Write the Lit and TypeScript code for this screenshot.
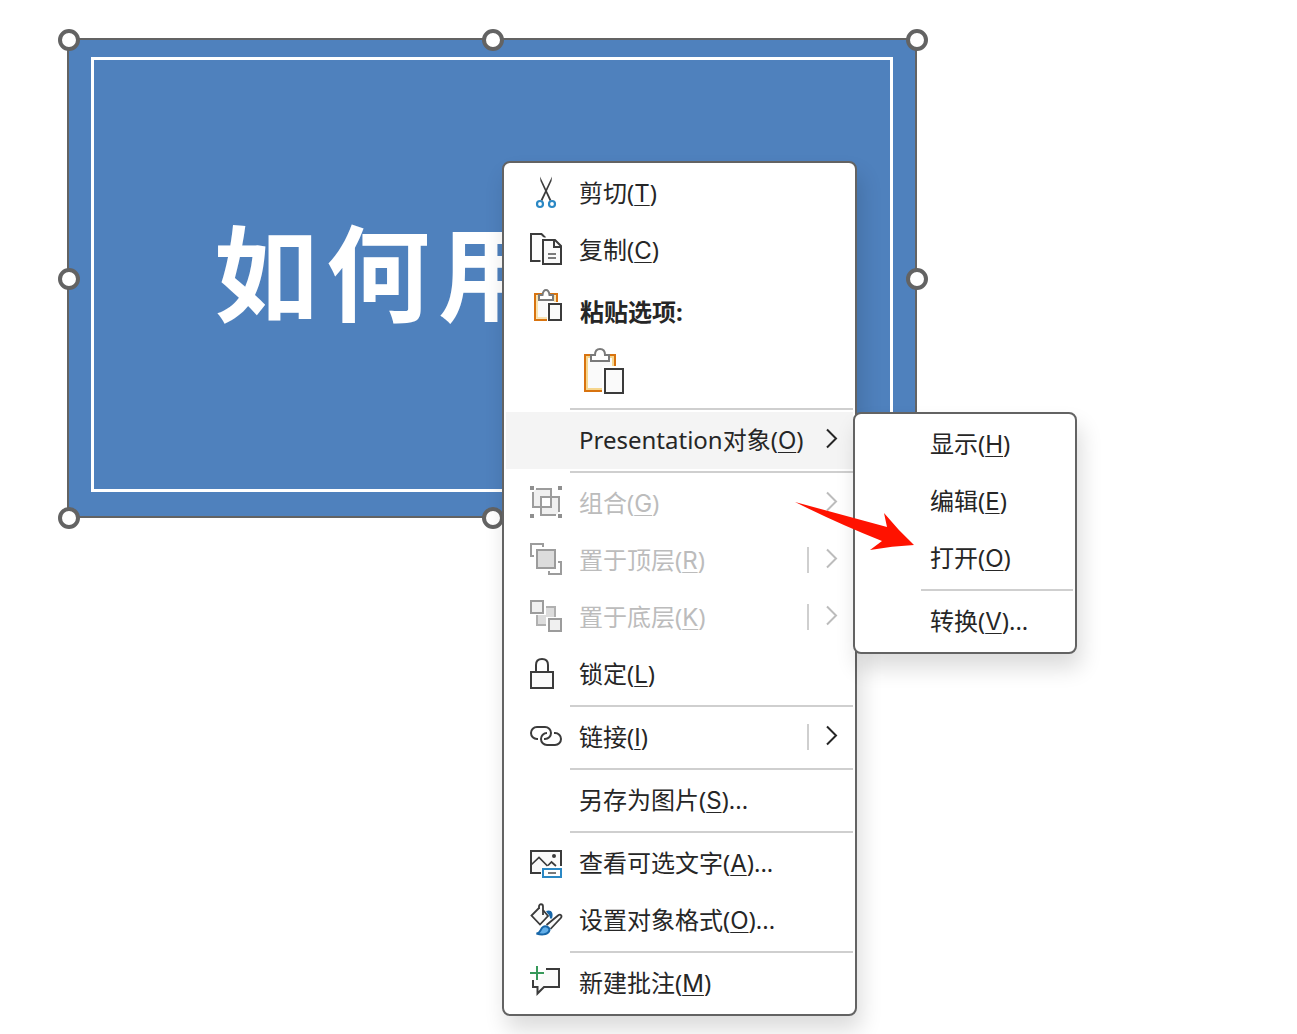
import { LitElement, html, css, svg, nothing, TemplateResult } from "lit";
import { customElement, property } from "lit/decorators.js";
import { classMap } from "lit/directives/class-map.js";

interface Entry {
  label: string;
  key: string;
  tail?: string;
  icon?: string;
  disabled?: boolean;
  arrow?: boolean;
  split?: boolean;
  submenu?: (Entry | "line")[];
}

const dark = "#3b3b3b";
const grey = "#9c9c9c";

const icons: Record<string, TemplateResult> = {
  cut: svg`
    <path d="M12 0.5 L12.500 5 L21.700 25 L23.300 24 Z" fill=${dark} />
    <path d="M24 0.5 L23.500 5 L14.300 25 L12.700 24 Z" fill=${dark} />
    <g fill="#fff" stroke="#2b88c4" stroke-width="2.2">
      <circle cx="12" cy="28" r="3" /><circle cx="24" cy="28" r="3" />
    </g>`,
  copy: svg`
    <path d="M13 28 H3 V1 H13.500 L17.500 5" fill="#fafafa" stroke=${dark} stroke-width="2" />
    <path d="M15 7 H27 L33 13 V31 H15 Z" fill="#fafafa" stroke="#fff" stroke-width="5" />
    <path d="M15 7 H27 L33 13 V31 H15 Z" fill="#fafafa" stroke=${dark} stroke-width="2" />
    <path d="M26 7 V14 H33" fill="none" stroke=${dark} stroke-width="2" />
    <path d="M20 21 H28 M20 25 H28" stroke="#7a7a7a" stroke-width="1.8" />`,
  paste: svg`
    <path d="M7 6 H29 V32 H7 Z" fill="#fafafa" stroke="#d8730f" stroke-width="2" />
    <path d="M9 8 H27 V30 H9 Z" fill="none" stroke="#f8dc9c" stroke-width="1.6" />
    <path d="M19 14 H35 V35 H19 Z" fill="#fff" />
    <path d="M11 12 V7 H14.500 C15 3.500 16 2 18 2 S21 3.500 21.500 7 H25 V12 Z" fill="#fff" stroke="#7a7a7a" stroke-width="2" />
    <rect x="21" y="16" width="12" height="16" fill="#fafafa" stroke=${dark} stroke-width="2" />`,
  group: svg`
    <g fill="#8f8f8f"><rect x="2" y="0" width="4" height="4" /><rect x="30" y="0" width="4" height="4" />
    <rect x="2" y="28" width="4" height="4" /><rect x="30" y="28" width="4" height="4" /></g>
    <path d="M5 6 V21 H23 V3 H8 Z" fill="#f0f0f0" />
    <path d="M13 11 H31 V26 L28 29 H13 Z" fill="#f0f0f0" />
    <rect x="14" y="12" width="8" height="8" fill="#fff" />
    <path d="M8 3 H23 V21 H5 V6" fill="none" stroke=${grey} stroke-width="2" />
    <path d="M31 26 V11 H13 V29 H28" fill="none" stroke=${grey} stroke-width="2" />`,
  front: svg`
    <path d="M15 4 V1 H3 V13 H6 M30 19 H33 V31 H21 V28" fill="none" stroke=${grey} stroke-width="2" />
    <rect x="9" y="7" width="18" height="18" fill="#dcdcdc" stroke=${grey} stroke-width="2" />`,
  back: svg`
    <path d="M18 7 H27 V17 H18 Z M9 15 H18 V25 H9 Z" fill="#dcdcdc" />
    <path d="M18 7 H27 V17 M9 15 V25 H18" fill="none" stroke="#b0b0b0" stroke-width="2" />
    <g fill="#f0f0f0" stroke=${grey} stroke-width="2"><rect x="3" y="1" width="12" height="12" /><rect x="21" y="19" width="12" height="12" /></g>`,
  lock: svg`
    <rect x="3" y="15" width="22" height="16" fill="#fafafa" stroke=${dark} stroke-width="2" />
    <path d="M8 15 V8 C8 4 10.500 2 14 2 S20 4 20 8 V15" fill="none" stroke=${dark} stroke-width="2" />`,
  link: svg`
    <path d="M10 19 H9 A6 6 0 0 1 9 7 H17 A6 6 0 0 1 17 19 H16" fill="none" stroke=${dark} stroke-width="2" />
    <path d="M19 13 A6 6 0 0 0 19 25 H27 A6 6 0 0 0 27 13 H26" fill="none" stroke=${dark} stroke-width="2" />`,
  alt: svg`
    <path d="M13 27 H3 V5 H33 V20 H13 Z" fill="#fafafa" />
    <path d="M13 27 H3 V5 H33 V20" fill="none" stroke=${dark} stroke-width="2" />
    <path d="M3 19 L11 11.500 L19.500 20 M20 19.500 L23.500 16 L28 20" fill="none" stroke=${dark} stroke-width="1.7" />
    <circle cx="26" cy="10" r="2" fill=${dark} />
    <rect x="15" y="23" width="18" height="8" fill="#fff" stroke="#2b88c4" stroke-width="2" />
    <path d="M20 27 H28" stroke="#7a7a7a" stroke-width="2" />`,
  format: svg`
    <path d="M11 5 L3.500 12.500 L12 21.500 L20 13 L15 7" fill="#fafafa" stroke=${dark} stroke-width="1.8" />
    <path d="M11 6 V3.500 C11 0.500 15 0.500 15 3.500 V12" fill="none" stroke=${dark} stroke-width="1.8" />
    <path d="M18 8 C23 6 26 9.500 24 15.500 L22 15.500 C22 13 21 12 19.500 10.500 Z" fill="#1766a8" />
    <path d="M18.500 22 L30 12.500 C32.500 10.500 34.500 12.500 32.800 15 L22.500 26" fill="#fafafa" stroke=${dark} stroke-width="1.8" />
    <path d="M8.500 30.500 C13 30 12 26 15 24 C18 22 23 25 21 28.500 C19 32 13 32 8.500 30.500 Z" fill="#62aee8" stroke="#1766a8" stroke-width="2" />`,
  comment: svg`
    <path d="M18 3 H31 V21 H16 L9.500 27.500 V21 H5 V14 L12 13 Z" fill="#fafafa" />
    <path d="M18 3 H31 V21 H16 L9.500 27.500 V21 H5 V14" fill="none" stroke=${dark} stroke-width="2" />
    <path d="M9 0 V14 M2 7 H16" stroke="#37995a" stroke-width="2" />`,
};

const icon = (name?: string) =>
  html`<svg class="icon" viewBox="0 0 36 35" aria-hidden="true">${name ? icons[name] : nothing}</svg>`;

const menuBefore: Entry[] = [
  { label: "剪切", key: "T", icon: "cut" },
  { label: "复制", key: "C", icon: "copy" },
];

const menuAfter: (Entry | "line")[] = [
  "line",
  {
    label: "Presentation对象",
    key: "O",
    arrow: true,
    submenu: [
      { label: "显示", key: "H" },
      { label: "编辑", key: "E" },
      { label: "打开", key: "O" },
      "line",
      { label: "转换", key: "V", tail: "..." },
    ],
  },
  "line",
  { label: "组合", key: "G", icon: "group", arrow: true, disabled: true },
  { label: "置于顶层", key: "R", icon: "front", arrow: true, split: true, disabled: true },
  { label: "置于底层", key: "K", icon: "back", arrow: true, split: true, disabled: true },
  { label: "锁定", key: "L", icon: "lock" },
  "line",
  { label: "链接", key: "I", icon: "link", arrow: true, split: true },
  "line",
  { label: "另存为图片", key: "S", tail: "..." },
  "line",
  { label: "查看可选文字", key: "A", tail: "...", icon: "alt" },
  { label: "设置对象格式", key: "O", tail: "...", icon: "format" },
  "line",
  { label: "新建批注", key: "M", icon: "comment" },
];

@customElement("slide-object")
class SlideObject extends LitElement {
  static styles = css`
    :host {
      display: block;
      position: relative;
      box-sizing: border-box;
      border: 2px solid #636363;
      background: #4f81bd;
      padding: 17px 22px 24px;
    }
    .frame {
      box-sizing: border-box;
      height: 100%;
      border: 3px solid #fff;
      display: flex;
      align-items: center;
      padding: 0 0 12px 120px;
      overflow: hidden;
    }
    .title {
      margin: 0;
      color: #fff;
      font: 700 104px/160px "Noto Sans CJK SC", sans-serif;
      letter-spacing: 8px;
      white-space: nowrap;
    }
    .handles {
      position: absolute;
      inset: 0 -2px -2px 0;
    }
    .handle {
      position: absolute;
      width: 22px;
      height: 22px;
      box-sizing: border-box;
      border: 4px solid #636363;
      border-radius: 50%;
      background: #fff;
      transform: translate(-50%, -50%);
    }
    .n { top: 0; }
    .m { top: 50%; }
    .s { top: 100%; }
    .w { left: 0; }
    .c { left: 50%; }
    .e { left: 100%; }
  `;
  render() {
    return html`
      <div class="frame"><h1 class="title">如何用</h1></div>
      <div class="handles">
        ${["n w", "n c", "n e", "m w", "m e", "s w", "s c", "s e"].map(
          (place) => html`<span class="handle ${place}"></span>`
        )}
      </div>
    `;
  }
}

const menuStyles = css`
  * {
    box-sizing: border-box;
  }
  .menu {
    border: 2px solid #636363;
    border-radius: 8px;
    background: #fff;
    padding: 2px;
    box-shadow: 4px 14px 22px rgba(0, 0, 0, 0.14);
    font: 24px/32px "Noto Sans", "Noto Sans CJK SC", sans-serif;
    color: #262626;
  }
  .line {
    height: 2px;
    margin: 2px 0 2px 64px;
    border: 0;
    background: #cfcfcf;
  }
  .holder {
    position: relative;
  }
  .item {
    display: flex;
    align-items: center;
    gap: 15px;
    width: 100%;
    height: 57px;
    padding: 0 14px 0 22px;
    border: 0;
    background: none;
    font: inherit;
    color: inherit;
    text-align: left;
    white-space: nowrap;
  }
  .item.open {
    background: #f4f4f4;
  }
  .item:disabled {
    color: #bcbcbc;
  }
  .icon {
    flex: none;
    width: 36px;
    height: 35px;
  }
  .label {
    flex: 1;
  }
  .key {
    font-family: Inter, "Noto Sans", sans-serif;
    text-decoration: underline;
    text-decoration-thickness: 1px;
    text-underline-offset: 3px;
  }
  .more {
    flex: none;
    width: 32px;
    height: 35px;
    margin-left: -15px;
  }
  .heading {
    display: flex;
    align-items: flex-start;
    gap: 16px;
    height: 62px;
    padding: 9px 14px 0 22px;
  }
  .caption {
    margin: 0;
    font-size: 24px;
    line-height: 48px;
    font-weight: 700;
  }
  .options {
    display: flex;
    height: 65px;
    padding-left: 68px;
  }
  .option {
    padding: 6px 8px 11px;
    border: 0;
    background: none;
  }
  .picture {
    display: block;
    width: 44px;
    height: 48px;
  }
  .submenu {
    position: absolute;
    top: 0;
    left: 100%;
    z-index: 1;
    width: 224px;
  }
`;

@customElement("context-menu")
class ContextMenu extends LitElement {
  static styles = [menuStyles, css`:host { display: block; }`];

  @property({ attribute: false }) before: Entry[] = [];
  @property({ attribute: false }) after: (Entry | "line")[] = [];

  private entry(e: Entry | "line"): TemplateResult {
    if (e === "line") return html`<hr class="line" />`;
    return html`<div class="holder">
      <button class=${classMap({ item: true, open: !!e.submenu })} role="menuitem" ?disabled=${e.disabled}>
        ${icon(e.icon)}
        <span class="label">${e.label}(<span class="key">${e.key}</span>)${e.tail ?? ""}</span>
        ${e.arrow
          ? html`<svg class="more" viewBox="0 0 32 35" aria-hidden="true">
              ${e.split ? svg`<rect x="0" y="4" width="2" height="26" fill="#cfcfcf" />` : nothing}
              <path d="M20 6.500 L29 15.500 L20 24.500" fill="none" stroke="currentColor" stroke-width="2" />
            </svg>`
          : nothing}
      </button>
      ${e.submenu
        ? html`<div class="menu submenu" role="menu">${e.submenu.map((s) => this.entry(s))}</div>`
        : nothing}
    </div>`;
  }

  render() {
    return html`<div class="menu" role="menu">
      ${this.before.map((e) => this.entry(e))}
      <div class="heading">${icon("paste")}<h2 class="caption">粘贴选项:</h2></div>
      <div class="options">
        <button class="option" role="menuitem" aria-label="粘贴">
          <svg class="picture" viewBox="0 0 44 48" aria-hidden="true">
            <path d="M3 8 H33 V44 H3 Z" fill="#fafafa" stroke="#d8730f" stroke-width="2" />
            <path d="M5 10 H31 V42 H5 Z" fill="none" stroke="#f6d68e" stroke-width="2" />
            <path d="M20 19 H44 V48 H20 Z" fill="#fff" />
            <path d="M9 14 V8 H13 C13 4 15 2 18 2 S23 4 23 8 H27 V14 Z" fill="#fff" stroke="#7a7a7a" stroke-width="2" />
            <rect x="23" y="22" width="18" height="24" fill="#fafafa" stroke="#3b3b3b" stroke-width="2" />
          </svg>
        </button>
      </div>
      ${this.after.map((e) => this.entry(e))}
    </div>`;
  }
}

@customElement("app-root")
class AppRoot extends LitElement {
  static styles = css`
    :host {
      display: block;
      position: relative;
      box-sizing: border-box;
      min-height: 100vh;
      padding: 38px 67px;
      background: #fff;
      overflow: hidden;
    }
    .object {
      max-width: 850px;
      height: 480px;
    }
    .context {
      position: absolute;
      top: 161px;
      left: 502px;
      width: 355px;
    }
    .pointer {
      position: absolute;
      z-index: 2;
      top: 500px;
      left: 794px;
      width: 122px;
      height: 52px;
      pointer-events: none;
    }
  `;
  render() {
    return html`
      <slide-object class="object"></slide-object>
      <context-menu class="context" .before=${menuBefore} .after=${menuAfter}></context-menu>
      <svg class="pointer" viewBox="0 0 122 52" aria-hidden="true">
        <path d="M1 2 Q45 14 93 27 L90 13 Q104 30 120 45 Q98 46 76 50 L88 41 Q45 24 1 2 Z" fill="#ff1200" />
      </svg>
    `;
  }
}
